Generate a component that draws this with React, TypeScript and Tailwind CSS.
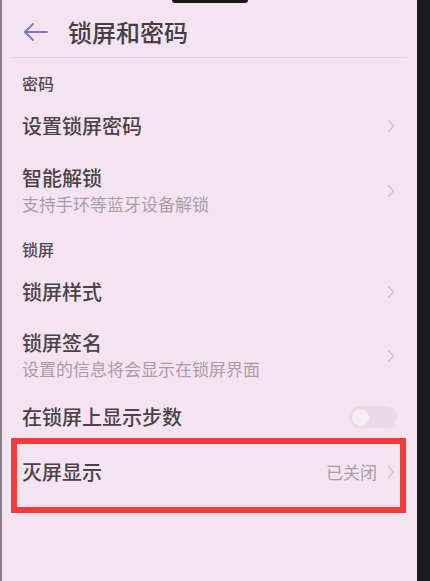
import React from "react";

const font = { fontFamily: '"Noto Sans CJK SC", "Noto Sans", sans-serif' };

function Chevron() {
  return (
    <svg width="8" height="14" viewBox="0 0 8 14" className="shrink-0">
      <polyline points="1.5,1.5 6.5,7 1.5,12.5" fill="none" stroke="#cfc0cb" strokeWidth="1.4" strokeLinecap="round" strokeLinejoin="round" />
    </svg>
  );
}

export default function App() {
  return (
    <div className="relative w-[430px] h-[581px] overflow-hidden flex bg-[#f4e4f1]" style={font}>
      <div className="w-[2px] bg-[#8a7f87]" />
      <div className="flex-1 flex flex-col">
        {/* header */}
        <div className="h-[57px] flex items-center pt-[6px] pl-[21px]">
          <svg width="26" height="20" viewBox="0 0 26 20">
            <polyline points="10,2 2,10 10,18" fill="none" stroke="#7a7ad0" strokeWidth="1.8" strokeLinecap="round" strokeLinejoin="round" />
            <line x1="2" y1="10" x2="24" y2="10" stroke="#7a7ad0" strokeWidth="1.8" strokeLinecap="round" />
          </svg>
          <span className="ml-[19px] text-[24px] leading-[30px] font-medium text-[#453f44]">锁屏和密码</span>
        </div>
        <div className="h-px mx-[10px] bg-[#e2d2de]" />

        {/* 密码 section */}
        <div className="h-[48px] flex items-center pt-[2px] pl-[20px] text-[16px] font-medium text-[#514a50]">密码</div>

        <div className="h-[40px] flex items-center pl-[20px] pr-[22px]">
          <span className="flex-1 text-[20px] leading-[24px] font-medium text-[#4a434a]">设置锁屏密码</span>
          <Chevron />
        </div>

        <div className="h-[82px] flex items-start pt-[20px] pl-[20px] pr-[22px]">
          <div className="flex-1 flex flex-col gap-[2px]">
            <span className="text-[20px] leading-[24px] font-medium text-[#4a434a]">智能解锁</span>
            <span className="text-[17px] leading-[24px] text-[#a99da6]">支持手环等蓝牙设备解锁</span>
          </div>
          <div className="h-[50px] flex items-center"><Chevron /></div>
        </div>

        {/* 锁屏 section */}
        <div className="h-[42px] flex items-center pl-[20px] text-[16px] font-medium text-[#514a50]">锁屏</div>

        <div className="h-[44px] flex items-center pl-[20px] pr-[22px]">
          <span className="flex-1 text-[20px] leading-[24px] font-medium text-[#4a434a]">锁屏样式</span>
          <Chevron />
        </div>

        <div className="h-[80px] flex items-start pt-[17px] pl-[20px] pr-[22px]">
          <div className="flex-1 flex flex-col gap-[2px]">
            <span className="text-[20px] leading-[24px] font-medium text-[#4a434a]">锁屏签名</span>
            <span className="text-[17px] leading-[24px] text-[#a99da6]">设置的信息将会显示在锁屏界面</span>
          </div>
          <div className="h-[50px] flex items-center"><Chevron /></div>
        </div>

        <div className="h-[46px] flex items-center pl-[20px] pr-[20px]">
          <span className="flex-1 text-[20px] leading-[24px] font-medium text-[#4a434a]">在锁屏上显示步数</span>
          <div className="w-[48px] h-[22px] rounded-full bg-[#e9dae5] flex items-center px-[3px]">
            <div className="w-[17px] h-[17px] rounded-full bg-[#f6edf4]" />
          </div>
        </div>

        {/* highlighted row */}
        <div className="-mt-[2px] ml-[9px] mr-[11px] h-[75px] border-[6px] border-[#f23b3b] flex items-center pb-[7px] pl-[5px] pr-[5px]">
          <span className="flex-1 text-[20px] leading-[24px] font-medium text-[#4a434a]">灭屏显示</span>
          <span className="text-[17px] leading-[24px] text-[#a99da6] mr-[10px]">已关闭</span>
          <Chevron />
        </div>
      </div>
      <div className="w-[13px] bg-[#1d1c1e]" />

      {/* notch */}
      <div className="absolute top-0 left-[172px] w-[76px] h-[3px] rounded-b-md bg-[#151515]" />
    </div>
  );
}
